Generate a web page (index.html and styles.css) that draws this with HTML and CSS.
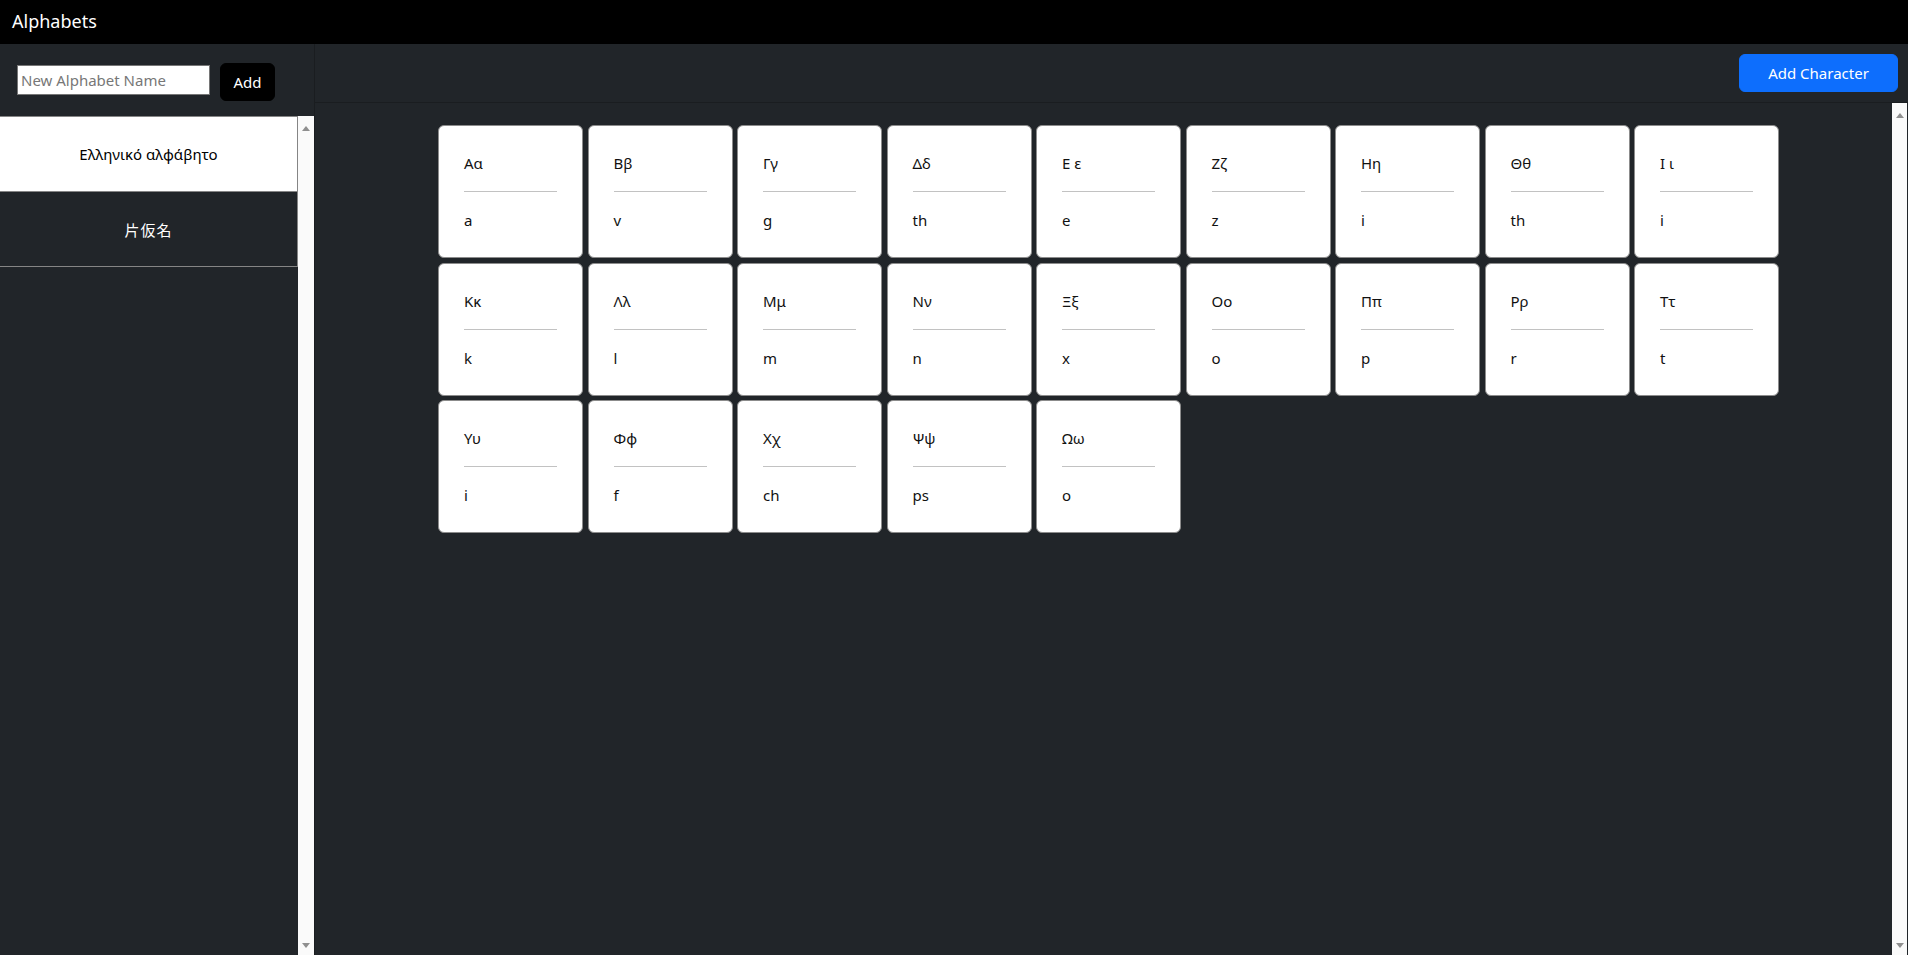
FILE: index.html
```html
<!DOCTYPE html>
<html lang="en">
<head>
<meta charset="utf-8">
<title>Alphabets</title>
<link rel="stylesheet" href="styles.css">
</head>
<body>
<header class="topbar"><span class="brand">Alphabets</span></header>
<div class="layout">
  <aside class="sidebar">
    <div class="sidebar-head">
      <input class="name-input" type="text" placeholder="New Alphabet Name">
      <button class="btn btn-black">Add</button>
    </div>
    <div class="list-wrap">
      <ul class="alpha-list">
        <li class="alpha-item active">Ελληνικό αλφάβητο</li>
        <li class="alpha-item cjk">片仮名</li>
      </ul>
      <div class="fake-scroll"><span class="arrow up"></span><span class="arrow down"></span></div>
    </div>
  </aside>
  <main class="main">
    <div class="main-head">
      <button class="btn btn-blue">Add Character</button>
    </div>
    <div class="main-body">
      <div class="content">
        <div class="grid">
          <div class="card"><p>Αα</p><hr><p>a</p></div>
          <div class="card"><p>Ββ</p><hr><p>v</p></div>
          <div class="card"><p>Γγ</p><hr><p>g</p></div>
          <div class="card"><p>Δδ</p><hr><p>th</p></div>
          <div class="card"><p>Ε ε</p><hr><p>e</p></div>
          <div class="card"><p>Ζζ</p><hr><p>z</p></div>
          <div class="card"><p>Ηη</p><hr><p>i</p></div>
          <div class="card"><p>Θθ</p><hr><p>th</p></div>
          <div class="card"><p>Ι ι</p><hr><p>i</p></div>
          <div class="card"><p>Κκ</p><hr><p>k</p></div>
          <div class="card"><p>Λλ</p><hr><p>l</p></div>
          <div class="card"><p>Μμ</p><hr><p>m</p></div>
          <div class="card"><p>Νν</p><hr><p>n</p></div>
          <div class="card"><p>Ξξ</p><hr><p>x</p></div>
          <div class="card"><p>Οο</p><hr><p>o</p></div>
          <div class="card"><p>Ππ</p><hr><p>p</p></div>
          <div class="card"><p>Ρρ</p><hr><p>r</p></div>
          <div class="card"><p>Ττ</p><hr><p>t</p></div>
          <div class="card"><p>Υυ</p><hr><p>i</p></div>
          <div class="card"><p>Φφ</p><hr><p>f</p></div>
          <div class="card"><p>Χχ</p><hr><p>ch</p></div>
          <div class="card"><p>Ψψ</p><hr><p>ps</p></div>
          <div class="card"><p>Ωω</p><hr><p>o</p></div>
        </div>
      </div>
      <div class="fake-scroll"><span class="arrow up"></span><span class="arrow down"></span></div>
    </div>
  </main>
</div>
</body>
</html>
```

FILE: styles.css
```css
* { box-sizing: border-box; }

html, body {
  margin: 0;
  height: 100%;
}

body {
  background: #212529;
  font-family: "Noto Sans", "Noto Sans CJK JP", sans-serif;
  font-size: 15px;
  color: #fff;
  overflow: hidden;
  display: flex;
  flex-direction: column;
}

.topbar {
  height: 44px;
  flex: 0 0 44px;
  background: #000;
  display: flex;
  align-items: center;
  padding-left: 12px;
}

.brand {
  font-size: 18px;
  color: #fff;
  line-height: 24px;
  margin-top: -2px;
}

.layout {
  flex: 1;
  display: flex;
  min-height: 0;
}

.sidebar {
  width: 315px;
  flex: 0 0 315px;
  border-right: 1px solid #1a1d20;
  display: flex;
  flex-direction: column;
}

.sidebar-head {
  height: 72px;
  flex: 0 0 72px;
  display: flex;
  align-items: flex-start;
  padding: 19px 0 0 17px;
  gap: 10px;
}

.name-input {
  width: 193px;
  height: 30px;
  margin-top: 2px;
  border: 1px solid #767676;
  padding: 1px 3px;
  font-family: "Noto Sans", sans-serif;
  font-size: 15px;
  color: #000;
  background: #fff;
}

.name-input::placeholder { color: #777; }

.btn {
  font-family: "Noto Sans", sans-serif;
  font-size: 15px;
  line-height: 24px;
  padding: 6px 12px;
  border-radius: 6px;
  color: #fff;
  cursor: pointer;
}

.btn-black {
  background: #000;
  border: 1px solid #000;
  width: 55px;
  height: 38px;
  padding: 6px 0;
}

.list-wrap {
  flex: 1;
  display: flex;
  min-height: 0;
}

.alpha-list {
  flex: 1;
  list-style: none;
  margin: 0;
  padding: 0;
}

.alpha-item {
  height: 76px;
  border: 1px solid #858585;
  border-left: none;
  display: flex;
  align-items: center;
  justify-content: center;
  font-size: 15px;
  color: #fff;
  background: #212529;
}

.alpha-item + .alpha-item {
  border-top: none;
  height: 75px;
}

.alpha-item.active {
  background: #fff;
  color: #000;
}

.alpha-item.cjk {
  font-family: "Noto Sans CJK JP", sans-serif;
  letter-spacing: 1px;
}

.fake-scroll {
  width: 16px;
  flex: 0 0 16px;
  background: #fafafa;
  display: flex;
  flex-direction: column;
  justify-content: space-between;
  align-items: center;
  padding: 10px 0 7px;
}

.arrow {
  width: 0;
  height: 0;
  border-left: 4.5px solid transparent;
  border-right: 4.5px solid transparent;
}

.arrow.up { border-bottom: 5px solid #8f8f8f; }
.arrow.down { border-top: 5px solid #8f8f8f; }

.main {
  flex: 1;
  display: flex;
  flex-direction: column;
  min-width: 0;
}

.main-head {
  height: 59px;
  flex: 0 0 59px;
  border-bottom: 1px solid #1a1d20;
  display: flex;
  justify-content: flex-end;
  align-items: flex-start;
  padding: 10px 10px 0 0;
}

.btn-blue {
  background: #0d6efd;
  border: 1px solid #0d6efd;
  width: 159px;
  height: 38px;
}

.main-body {
  flex: 1;
  display: flex;
  min-height: 0;
}

.main-body .fake-scroll {
  width: 15px;
  flex: 0 0 15px;
  margin-right: 1px;
  padding: 10px 0 7px;
}

.content {
  flex: 1;
  padding: 22px 0 0 123px;
}

.grid {
  display: grid;
  grid-template-columns: repeat(9, 145px);
  gap: 4.5px;
}

.card {
  width: 145px;
  height: 133px;
  background: #fff;
  border: 1px solid #8c8c8c;
  border-radius: 6px;
  padding: 25px;
  color: #111;
}

.card p {
  margin: 0;
  font-size: 15px;
  line-height: 24px;
}

.card hr {
  margin: 16px 0;
  border: 0;
  border-top: 1px solid #c2c2c2;
  height: 0;
}
```
